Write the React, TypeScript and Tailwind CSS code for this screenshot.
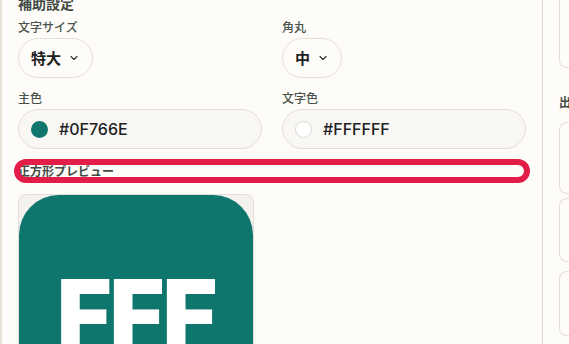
import { ChevronDown } from "lucide-react";

const jp = { fontFamily: '"Noto Sans CJK JP", "Noto Sans", sans-serif' };

function Label({ children }: { children: React.ReactNode }) {
  return (
    <div className="text-[12px] leading-4 font-medium text-[#4a524d]" style={jp}>
      {children}
    </div>
  );
}

function Pill({ value }: { value: string }) {
  return (
    <button className="mt-[3px] flex h-10 items-center gap-[7px] rounded-full border border-[#e4e0d7] bg-[#fdfcf8] pl-[12px] pr-[12px]">
      <span className="text-[15px] font-bold text-[#1d211f]" style={jp}>
        {value}
      </span>
      <ChevronDown size={12} strokeWidth={2.2} className="text-[#2a2e2b]" />
    </button>
  );
}

function ColorField({ color, white }: { color: string; white?: boolean }) {
  return (
    <div className="mt-[3px] flex h-10 items-center gap-[11px] rounded-full border border-[#e2dfd6] bg-[#f8f7f3] pl-3">
      <span
        className={`h-[17px] w-[17px] rounded-full ${white ? "border border-[#dcd9d0] bg-white" : "bg-[#0F766E]"}`}
      />
      <span className="font-['Inter'] text-[16px] font-medium text-[#1d211f]">{color}</span>
    </div>
  );
}

export default function App() {
  return (
    <div className="flex h-[344px] w-[569px] overflow-hidden bg-[#fdfcf8]">
      {/* left panel */}
      <div className="w-[542px] shrink-0 border-l-2 border-[#e6e2d8] px-4">
        <div className="-mt-[7px] text-[14px] leading-5 font-bold text-[#414a45]" style={jp}>
          補助設定
        </div>
        <div className="mt-[6px] grid grid-cols-2 gap-x-5">
          <div>
            <Label>文字サイズ</Label>
            <div className="flex">
              <Pill value="特大" />
            </div>
          </div>
          <div>
            <Label>角丸</Label>
            <div className="flex">
              <Pill value="中" />
            </div>
          </div>
        </div>
        <div className="mt-[12px] grid grid-cols-2 gap-x-5">
          <div>
            <Label>主色</Label>
            <ColorField color="#0F766E" />
          </div>
          <div>
            <Label>文字色</Label>
            <ColorField color="#FFFFFF" white />
          </div>
        </div>
        <div className="relative mt-[14px] text-[12px] leading-4 font-bold text-[#414a45]" style={jp}>
          正方形プレビュー
          <span className="absolute -inset-x-1 -inset-y-1 rounded-full border-[6px] border-[#e11d48]" />
        </div>
        <div className="mt-[15px] h-[238px] w-[236px] overflow-hidden rounded-lg border border-[#e2dfd6] bg-[#f3f2ee]">
          <div className="flex h-[236px] w-[234px] items-center justify-center rounded-[40px] bg-[#0F766E]">
            <span className="font-['Inter'] text-[94px] leading-none font-black tracking-[-2px] text-white">
              FFF
            </span>
          </div>
        </div>
      </div>
      {/* right panel */}
      <div className="min-w-0 flex-1 border-l border-[#ddd8cc] pl-4">
        <div className="-mt-2 h-[76px] rounded-l-lg border border-r-0 border-[#e2dfd6]" />
        <div className="mt-[26px] whitespace-nowrap text-[12px] leading-4 font-bold text-[#414a45]" style={jp}>
          出力
        </div>
        <div className="mt-[12px] flex flex-col gap-1">
          <div className="h-[72px] rounded-l-lg border border-r-0 border-[#e2dfd6]" />
          <div className="h-[64px] rounded-l-lg border border-r-0 border-[#e2dfd6]" />
          <div className="mt-[5px] h-[65px] rounded-l-lg border border-r-0 border-[#e2dfd6]" />
        </div>
      </div>
    </div>
  );
}
